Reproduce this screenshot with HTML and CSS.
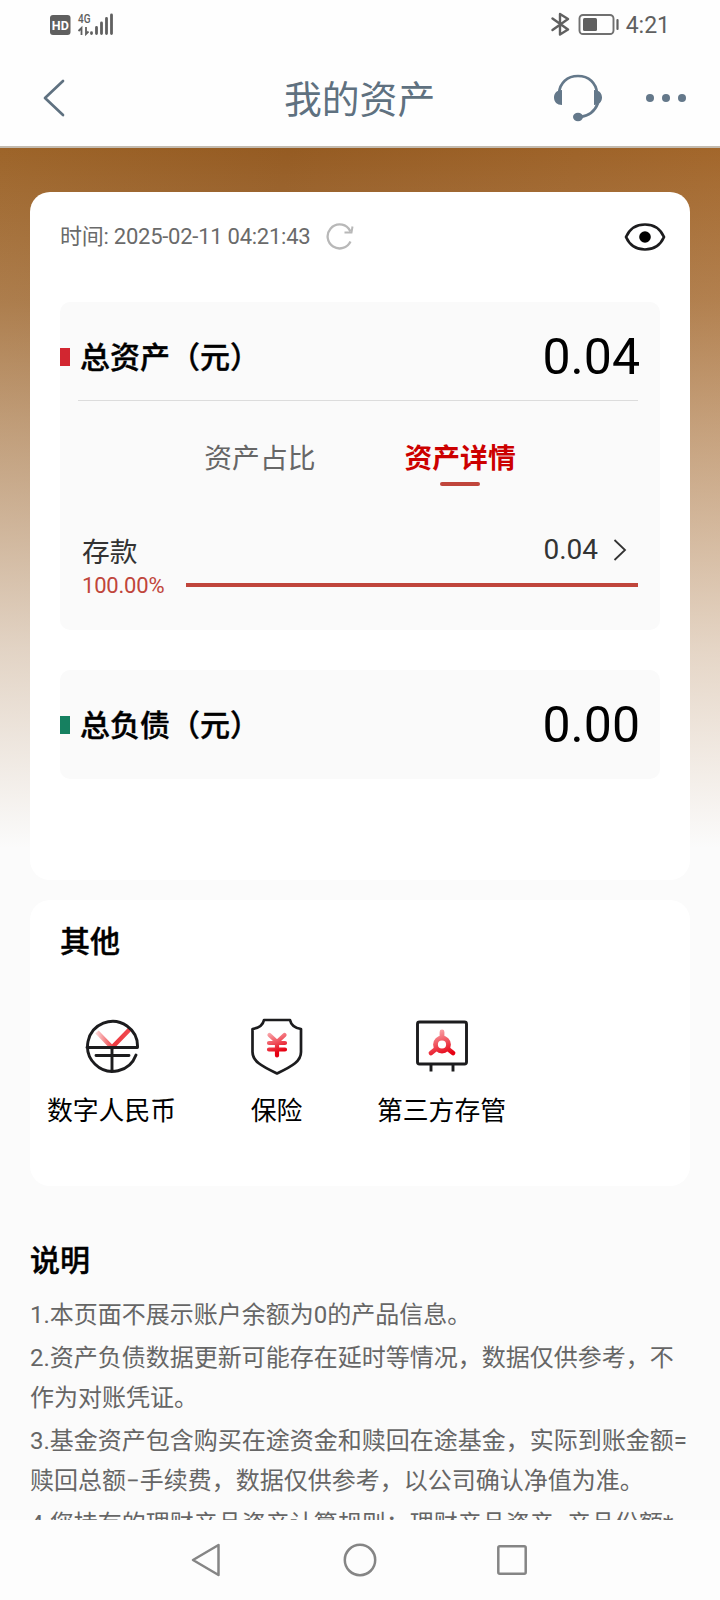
FILE: index.html
```html
<!DOCTYPE html>
<html lang="zh-CN">
<head>
<meta charset="utf-8">
<title>我的资产</title>
<link rel="stylesheet" href="styles.css">
</head>
<body>
<div class="screen">
  <header class="top">
    <div class="status">
      <svg class="status-left" width="66" height="24" viewBox="0 0 66 24">
        <rect x="1" y="3" width="20.500" height="20" rx="3" fill="#5f5f5f"/>
        <text x="2.800" y="17.500" class="hd" textLength="17" lengthAdjust="spacingAndGlyphs">HD</text>
        <text x="29" y="10.500" class="net" textLength="12.500" lengthAdjust="spacingAndGlyphs">4G</text>
        <path d="M29.500 19l3-3v7M37 15v7l2.500-2.500" fill="none" stroke="#606060" stroke-width="1.800"/>
        <path d="M42.500 20.700v.8M47.500 15.500v6M52.500 11v10.500M57.500 6.500v15M62.500 3v18.500" stroke="#606060" stroke-width="2.800" stroke-linecap="round"/>
      </svg>
      <div class="status-right">
        <svg width="70" height="24" viewBox="0 0 70 24">
          <path d="M1.500 6.500l15.500 11-8 5V2l8 5-15.500 11" fill="none" stroke="#606060" stroke-width="2.400" stroke-linejoin="round" stroke-linecap="round"/>
          <rect x="28.500" y="3" width="34" height="19" rx="3.500" fill="none" stroke="#707070" stroke-width="1.900"/>
          <rect x="32" y="6" width="14" height="13" rx="1.500" fill="#606060"/>
          <path d="M66.500 8v9" stroke="#606060" stroke-width="2.200" stroke-linecap="round"/>
        </svg>
        <span class="clock">4:21</span>
      </div>
    </div>
    <div class="titlebar">
      <svg width="26" height="42" viewBox="0 0 26 42" fill="none" stroke="#5f7180" stroke-width="2.700" stroke-linejoin="round" stroke-linecap="round"><path d="M22 4L4 21l18 17"/></svg>
      <h1 class="title">我的资产</h1>
      <div class="actions">
        <svg width="50" height="50" viewBox="0 0 50 50" fill="#64788a">
          <path d="M6 20C7 10 14 3 25 3s18 7 19 17M45 30c-3 8-9 13-18 14" fill="none" stroke="#64788a" stroke-width="2.700"/>
          <path d="M9 17v15C4 32 1 29 1 24.500S4 17 9 17ZM41 17c5 0 8 3 8 7.500S46 32 41 32Z"/>
          <ellipse cx="25" cy="44" rx="5" ry="4.200"/>
        </svg>
        <svg width="40" height="8" viewBox="0 0 40 8" fill="#64788a"><circle cx="4" cy="4" r="4"/><circle cx="20" cy="4" r="4"/><circle cx="36" cy="4" r="4"/></svg>
      </div>
    </div>
  </header>

  <main class="content">
    <section class="card assets">
      <div class="time-row">
        <span class="time">时间: 2025-02-11 04:21:43</span>
        <svg class="refresh" width="28" height="28" viewBox="0 0 28 28" fill="none" stroke="#b8b8b8" stroke-width="2.300"><path d="M24.500 18.500A12 12 0 1 1 22.600 5.500l2 3"/><path d="M18.500 9.500h7l1-6" stroke-width="2"/></svg>
        <svg class="eye" width="42" height="30" viewBox="0 0 42 30"><path d="M2 15C6 6 13 2.500 21 2.500s15 3.500 19 12.500c-4 9-11 12.500-19 12.500S6 24 2 15Z" fill="none" stroke="#1c1c1e" stroke-width="2.700" stroke-linejoin="round"/><circle cx="21" cy="15" r="5.800" fill="#000"/></svg>
      </div>
      <div class="panel total">
        <div class="summary">
          <i class="mark red"></i><h2 class="heading">总资产（元）</h2><span class="amount">0.04</span>
        </div>
        <div class="rule"></div>
        <div class="tabs"><span class="tab">资产占比</span><span class="tab active">资产详情</span></div>
        <div class="deposit"><span>存款</span><span class="value">0.04</span><svg width="14" height="22" viewBox="0 0 14 22" fill="none" stroke="#333" stroke-width="1.800"><path d="M1.500 1L12 11 1.500 21"/></svg></div>
        <div class="share"><span class="percent">100.00%</span><div class="track"><div class="fill" style="width:100%"></div></div></div>
      </div>
      <div class="panel debt">
        <div class="summary">
          <i class="mark green"></i><h2 class="heading">总负债（元）</h2><span class="amount">0.00</span>
        </div>
      </div>
    </section>

    <section class="card others">
      <h2 class="heading">其他</h2>
      <div class="grid">
        <div class="item">
          <svg width="56" height="60" viewBox="0 0 56 60" fill="none">
            <defs><linearGradient id="yuan" x1="0" x2="1"><stop offset="0" stop-color="#fbd0d0"/><stop offset=".5" stop-color="#ee3940"/><stop offset="1" stop-color="#f04a50"/></linearGradient></defs>
            <path d="M13 15l15 15.500L46 12" stroke="url(#yuan)" stroke-width="4.500"/>
            <path d="M3 30.500h50.500A25 25 0 1 0 52 38M28 31v23M12 38.500h33" stroke="#1c1c1e" stroke-width="2.900" stroke-linecap="round" stroke-linejoin="round"/>
          </svg>
          <span>数字人民币</span>
        </div>
        <div class="item">
          <svg width="56" height="60" viewBox="0 0 56 60" fill="none">
            <defs><linearGradient id="coin" gradientUnits="userSpaceOnUse" x1="20" y1="14" x2="28" y2="36"><stop offset="0" stop-color="#fbb5b8"/><stop offset="1" stop-color="#e60012"/></linearGradient></defs>
            <path d="M15 3h26c1 5 5 8 11 9v23c0 9-8 14-24 21.500C12 49 3.500 44 3.500 35V12c6-1 10.500-4 11.500-9Z" stroke="#1c1c1e" stroke-width="2.700" stroke-linejoin="round"/>
            <path d="M20.500 18l7.500 7 7.500-7M20 26h16M20 32.500h16M28 26v12.500" stroke="url(#coin)" stroke-width="4.200" stroke-linecap="round"/>
          </svg>
          <span>保险</span>
        </div>
        <div class="item">
          <svg width="56" height="60" viewBox="0 0 56 60" fill="none">
            <defs><linearGradient id="hub" gradientUnits="userSpaceOnUse" x1="22" y1="12" x2="32" y2="38"><stop offset="0" stop-color="#fbb0b3"/><stop offset="1" stop-color="#e60012"/></linearGradient></defs>
            <rect x="3.500" y="5" width="49" height="42" rx="2" stroke="#1c1c1e" stroke-width="2.900"/>
            <path d="M17 47v7.500M39 47v7.500" stroke="#1c1c1e" stroke-width="2.900"/>
            <g stroke="url(#hub)" stroke-width="4.800" stroke-linecap="round"><circle cx="28" cy="27.500" r="6.500"/><path d="M28.010 15L28 20M22 32l-5 4M34 32l5 4"/></g>
          </svg>
          <span>第三方存管</span>
        </div>
      </div>
    </section>

    <section class="notes">
      <h2 class="heading">说明</h2>
      <p>1.本页面不展示账户余额为0的产品信息。</p>
      <p>2.资产负债数据更新可能存在延时等情况，数据仅供参考，不<br>作为对账凭证。</p>
      <p>3.基金资产包含购买在途资金和赎回在途基金，实际到账金额=<br>赎回总额−手续费，数据仅供参考，以公司确认净值为准。</p>
      <p>4.您持有的理财产品资产计算规则：理财产品资产=产品份额*</p>
    </section>
  </main>

  <nav class="navbar">
    <svg width="30" height="34" viewBox="0 0 30 34" fill="none" stroke="#858585" stroke-width="2.500" stroke-linejoin="round"><path d="M27.500 2v30L2 17Z"/></svg>
    <svg width="34" height="34" viewBox="0 0 34 34" fill="none" stroke="#858585" stroke-width="2.500"><circle cx="17" cy="17" r="15.200"/></svg>
    <svg class="recent" width="30" height="30" viewBox="0 0 30 30" fill="none" stroke="#858585" stroke-width="2.500"><rect x="1.300" y="1.300" width="27.400" height="27.400" rx="1.500"/></svg>
  </nav>
</div>
</body>
</html>
```
FILE: styles.css
```css
* { box-sizing: border-box; }
body { margin: 0; font-family: Roboto, "Noto Sans CJK SC", sans-serif; color: #000; }
h1, h2, p { margin: 0; }
svg { display: block; flex: none; }
.screen { width: 720px; height: 1600px; display: flex; flex-direction: column; overflow: hidden; background: #fbfbfb; }
.top { flex: none; height: 148px; background: #fefefe; border-bottom: 2px solid #c3bbb0; }
.status { height: 50px; padding: 12px 50px 0 49px; display: flex; justify-content: space-between; align-items: flex-start; }
.status-right { display: flex; gap: 5px; }
.clock { font-size: 23px; line-height: 28px; color: #606060; }
.hd { font: bold 12px Roboto, sans-serif; fill: #fff; }
.net { font: 500 13px Roboto, sans-serif; fill: #606060; }
.titlebar { height: 96px; padding: 0 34px 0 41px; display: grid; grid-template-columns: 243px auto 1fr; align-items: center; }
.title { padding-top: 4px; font-size: 37.800px; line-height: 50px; font-weight: 400; color: #5f7180; }
.actions { display: flex; align-items: center; justify-content: flex-end; gap: 43px; }

.content {
  flex: none; height: 1372px; overflow: hidden; padding: 44px 30px 0;
  background:
    linear-gradient(180deg, rgba(251,251,251,0) 0, rgba(251,251,251,.04) 30px, rgba(251,251,251,.17) 150px, rgba(251,251,251,.38) 275px, rgba(251,251,251,.56) 390px, rgba(251,251,251,.74) 500px, rgba(251,251,251,.86) 590px, #fbfbfb 700px),
    linear-gradient(100deg, #9d6429 0, #955b22 30%, #9e6329 60%, #aa6c2e 100%);
}
.card { background: #fff; border-radius: 20px; }
.assets { height: 688px; padding: 0 30px; }
.time-row { height: 110px; padding-top: 28px; display: flex; align-items: flex-start; }
.time { font-size: 22px; line-height: 34px; letter-spacing: -.25px; color: #6a6a6a; white-space: nowrap; }
.refresh { margin: 3px 0 0 16px; }
.eye { margin: 2px -6px 0 auto; }
.panel { background: #fafafa; border-radius: 10px; }
.total { height: 328px; }
.debt { height: 109px; margin-top: 40px; }
.summary { height: 98px; padding: 12px 20px 0 0; display: flex; align-items: center; }
.mark { width: 10px; height: 18px; margin-right: 10px; }
.red { background: #d22630; }
.green { background: #168060; }
.heading { font-size: 30px; line-height: 44px; font-weight: 500; -webkit-text-stroke: .4px #000; white-space: nowrap; }
.summary .heading { padding-top: 2px; }
.amount { margin-left: auto; font-size: 50px; line-height: 60px; }
.rule { height: 1px; margin: 0 22px 0 18px; background: #dcdcdc; }
.tabs { display: flex; justify-content: center; gap: 89px; padding-top: 38px; height: 126px; }
.tab { font-size: 27.800px; line-height: 40px; height: 46px; color: #666; }
.active { color: #c00; font-weight: 700; display: flex; flex-direction: column; align-items: center; }
.active::after { content: ""; flex: none; width: 40px; height: 4px; margin-top: 3px; border-radius: 2px; background: #c0453b; }
.deposit { height: 45px; padding: 0 33px 0 22px; display: flex; align-items: center; font-size: 27.800px; color: #333; }
.value { margin-left: auto; margin-right: 15px; font-size: 28px; }
.share { height: 26px; padding: 0 22px; display: flex; align-items: center; justify-content: space-between; }
.percent { font-size: 22px; letter-spacing: -.2px; color: #c0453b; }
.track { width: 452px; height: 4px; }
.fill { height: 4px; background: #c0453b; }

.others { height: 286px; margin-top: 20px; padding-top: 20px; }
.others .heading { padding-left: 30px; }
.grid { display: grid; grid-template-columns: repeat(4, 165px); padding-top: 53px; margin-left: -1px; }
.item { display: flex; flex-direction: column; align-items: center; gap: 15px; font-size: 25.800px; line-height: 38px; }
.notes { padding-top: 53px; color: #666; font-size: 24px; line-height: 40px; white-space: nowrap; }
.notes .heading { color: #000; margin-bottom: 12px; }
.notes p { margin-bottom: 3px; }

.navbar { flex: none; height: 80px; background: #fdfdfd; display: flex; align-items: center; justify-content: center; gap: 122px; }
.recent { margin: 0 2px 0 -2px; }
```
